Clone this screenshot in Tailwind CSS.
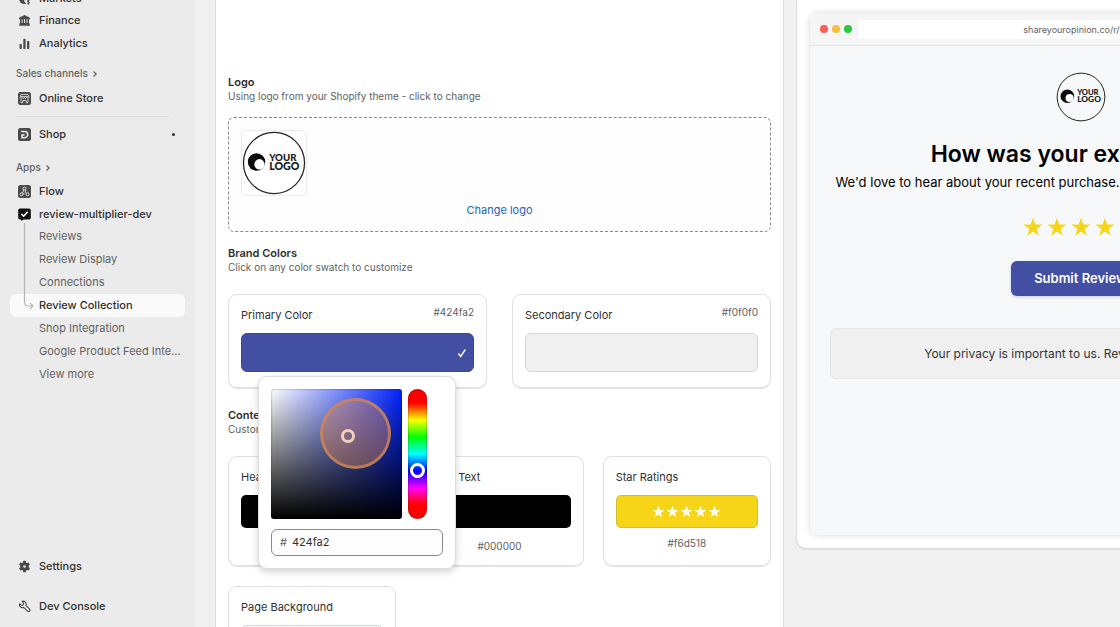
<!DOCTYPE html>
<html lang="en">
<head>
<meta charset="utf-8">
<meta name="viewport" content="width=device-width, initial-scale=1">
<title>Review Collection</title>
<script src="https://cdn.jsdelivr.net/npm/@tailwindcss/browser@4"></script>
</head>
<body class="h-screen overflow-hidden bg-[#f0f0f0] font-['Inter',sans-serif] text-[11px] text-[#303030]">
<svg class="hidden" aria-hidden="true">
  <symbol id="logo" viewBox="0 0 66 66">
    <circle cx="33" cy="33" r="31.5" fill="none" stroke="#222" stroke-width="1.3"/>
    <circle cx="15" cy="32" r="9" fill="#0b0b0b"/>
    <circle cx="18" cy="34.300" r="5.300" fill="#fff"/>
    <g font-family="Lato, sans-serif" font-weight="900" fill="#151515">
      <text x="28" y="31" font-size="10">YOUR</text>
      <text x="28" y="40" font-size="11">LOGO</text>
    </g>
  </symbol>
  <symbol id="star" viewBox="0 0 20 20">
    <path d="M10 .8l2.300 6.700 7.100.1-5.700 4.300 2.100 6.800L10 14.600l-5.800 4.100 2.100-6.800L.6 7.600l7.100-.1z" fill="currentColor"/>
  </symbol>
  <symbol id="chev" viewBox="0 0 6 8"><path d="M1.500 1.500 4.200 4l-2.700 2.500" fill="none" stroke="currentColor" stroke-width="1.200"/></symbol>
</svg>
<div class="flex h-full">
  <aside class="flex h-full w-[195px] shrink-0 flex-col justify-between overflow-hidden bg-[#ebebeb] px-[10px] pb-[9px]">
    <nav class="-mt-[13px] flex flex-col font-medium text-[#303030]" aria-label="Main">
      <a href="#" class="flex h-[22px] items-center gap-2 px-2"><svg class="size-[13px]" viewBox="0 0 13 13"><circle cx="6.500" cy="6.500" r="5.500" fill="#4a4a4a"/><path d="M7 6h6v7H9L6 9z" fill="#ebebeb"/><path d="M11.500 8.300c-2-.8-3 1.200-1 1.700s1.200 2-1 1.400M10.300 7.300v5.200" fill="none" stroke="#4a4a4a"/></svg>Markets</a>
      <a href="#" class="flex h-[23px] items-center gap-2 px-2"><svg class="size-[13px]" viewBox="0 0 13 13" fill="#4a4a4a"><path d="M6.500 1 12 3.700v1.500H1V3.700zM2 5h1.600v4.500H2zM4.500 5h1.500v4.500H4.500zM7 5h1.500v4.500H7zM9.500 5H11v4.500H9.500zM1.800 9h9.500l.8 2.800H1z"/></svg>Finance</a>
      <a href="#" class="flex h-[23px] items-center gap-2 px-2"><svg class="size-[13px]" viewBox="0 0 13 13" fill="#4a4a4a"><rect x="1.500" y="7" width="2.300" height="5" rx=".8"/><rect x="5.300" y="1.800" width="2.300" height="10.200" rx=".8"/><rect x="9" y="4" width="2.300" height="8" rx=".8"/></svg>Analytics</a>
      <a href="#" class="mt-[7px] flex h-[23px] items-center gap-1 px-[6px] text-[10px] font-medium text-[#616161]">Sales channels<svg class="h-2 w-[6px]"><use href="#chev"/></svg></a>
      <a href="#" class="mt-[2px] flex h-[23px] items-center gap-2 px-2"><svg class="size-[13px]" viewBox="0 0 13 13"><rect width="13" height="13" rx="2.500" fill="#4a4a4a"/><path d="M3 2.500h7l1 2.700c0 1.500-2 1.500-2.200.2-.3 1.300-2.200 1.300-2.400 0-.2 1.300-2 1.300-2.300 0C3.900 6.700 2 6.700 2 5.200zM3 6.800v3.900h1.800V8.500h3.400v2.200H10V6.800M2.500 4.500h8" fill="none" stroke="#e6e6e6" stroke-width=".8"/></svg>Online Store</a>
      <hr class="mt-[6px] mr-4 ml-[6px] border-[#dddddd]">
      <a href="#" class="mt-[6px] flex h-[23px] items-center gap-2 px-2"><svg class="size-[13px]" viewBox="0 0 13 13"><rect width="13" height="13" rx="2.500" fill="#4a4a4a"/><path d="M3.200 3.400h3.400a3.100 3.100 0 0 1 0 6.300H4V6.900h2.600" fill="none" stroke="#f1f1f1" stroke-width="1.500"/></svg>Shop<span class="mr-[2px] ml-auto size-[3px] rounded-full bg-[#303030]"></span></a>
      <a href="#" class="mt-[10px] flex h-[23px] items-center gap-1 px-[6px] text-[10px] font-medium text-[#616161]">Apps<svg class="h-2 w-[6px]"><use href="#chev"/></svg></a>
      <a href="#" class="mt-px flex h-[23px] items-center gap-2 px-2"><svg class="size-[13px]" viewBox="0 0 13 13"><rect width="13" height="13" rx="2.500" fill="#4a4a4a"/><g fill="none" stroke="#e6e6e6" stroke-width=".9"><circle cx="6.500" cy="3.500" r="1.500"/><circle cx="3.500" cy="9.300" r="1.500"/><circle cx="9.500" cy="9.300" r="1.500"/><path d="M5.300 4.500v2.300L4 8M7.600 4.500v3l.9.7M5 9.500l1.500-1.800"/></g></svg>Flow</a>
      <a href="#" class="flex h-[23px] items-center gap-2 px-2"><svg class="size-[13px]" viewBox="0 0 13 13"><path d="M2 .5h9A1.800 1.800 0 0 1 12.800 2.300v7.400A1.800 1.800 0 0 1 11 11.500H5.500L3.500 13l-.5-1.500H2A1.800 1.800 0 0 1 .2 9.700V2.300A1.800 1.800 0 0 1 2 .5z" fill="#111"/><path d="m3.500 6 2.200 2.200 4-4.400" fill="none" stroke="#fff" stroke-width="1.600"/></svg>review-multiplier-dev</a>
      <div class="relative -mt-px flex flex-col font-normal text-[#616161]">
        <a href="#" class="flex h-[23px] items-center pl-[29px]">Reviews</a>
        <a href="#" class="flex h-[23px] items-center pl-[29px]">Review Display</a>
        <a href="#" class="flex h-[23px] items-center pl-[29px]">Connections</a>
        <a href="#" class="flex h-[23px] items-center rounded-[6px] bg-[#fafafa] pl-[29px] font-medium text-[#303030]" aria-current="page">Review Collection</a>
        <a href="#" class="flex h-[23px] items-center pl-[29px]">Shop Integration</a>
        <a href="#" class="flex h-[23px] items-center pl-[29px]">Google Product Feed Inte...</a>
        <a href="#" class="flex h-[23px] items-center pl-[29px]">View more</a>
        <svg class="absolute -top-[2px] left-3 h-[88px] w-3" viewBox="0 0 12 88" fill="none" stroke="#b5b5b5" stroke-width="1.200"><path d="M2.500 0v79q0 4 4 4H10M8 80l3 3-3 3"/></svg>
      </div>
    </nav>
    <nav class="flex flex-col gap-[17px] font-medium text-[#303030]" aria-label="Tools">
      <a href="#" class="flex h-[23px] items-center gap-2 px-2"><svg class="size-[13px]" viewBox="0 0 13 13"><path d="M5.300.8h2.400l.4 1.600 1 .5 1.600-.5 1.200 2-1.100 1.300v1.600l1.100 1.300-1.200 2-1.600-.5-1 .5-.4 1.600H5.300l-.4-1.600-1-.5-1.600.5-1.200-2 1.100-1.300V5.700L1.100 4.400l1.200-2 1.600.5 1-.5z" fill="#4a4a4a"/><circle cx="6.500" cy="6.500" r="1.300" fill="#ebebeb"/></svg>Settings</a>
      <a href="#" class="flex h-[23px] items-center gap-2 px-2"><svg class="size-[13px]" viewBox="0 0 13 13" fill="none" stroke="#4a4a4a" stroke-width="1.100" stroke-linejoin="round"><path d="M4.100 1.300a3 3 0 0 1 3.800 4l3.700 3.800a1.300 1.300 0 0 1-2 2L5.600 7.400a3 3 0 0 1-4-3.700l1.800 1.600 1.800-.4.500-1.800z"/></svg>Dev Console</a>
    </nav>
  </aside>

  <main class="flex min-w-0 flex-1 gap-[14px] overflow-hidden pl-[21px]">
    <section class="shrink-0 grow basis-[567px] bg-white px-3 pt-[75px] shadow-[0_0_0_1px_#dedede]">
      <h2 class="text-[11px] leading-[14px] font-semibold">Logo</h2>
      <p class="text-[10px] leading-[14px] text-[#616161]">Using logo from your Shopify theme - click to change</p>
      <div class="mt-[14px] flex h-[115px] flex-col rounded-[6px] border border-dashed border-[#8a8a8a] bg-[#fdfdfd] px-3 pt-[12px]">
        <div class="size-[66px] rounded-[5px] border border-[#ebebeb] bg-white"><svg class="size-full" role="img" aria-label="Your logo"><use href="#logo"/></svg></div>
        <button class="mt-[6px] self-center text-[11px] leading-4 text-[#2065b8]">Change logo</button>
      </div>

      <h2 class="mt-[14px] text-[11px] leading-[14px] font-semibold">Brand Colors</h2>
      <p class="text-[10px] leading-[14px] text-[#616161]">Click on any color swatch to customize</p>
      <div class="mt-[20px] grid grid-cols-2 gap-[25px]">
        <div class="relative h-[94px] rounded-[9px] border border-[#e0e0e0] px-3 pt-[11px] shadow-[0_1px_0_#e3e3e3]">
          <div class="flex justify-between"><h3 class="pt-px leading-4">Primary Color</h3><span class="text-[10px] leading-3 text-[#616161]">#424fa2</span></div>
          <button aria-label="Primary color" class="mt-[10px] flex h-[39px] w-full items-center justify-end rounded-[6px] border border-[#3b4792] bg-[#424fa2] pr-[5px]"><svg class="size-3" viewBox="0 0 12 12"><path d="M2.300 6.500 4.700 9.500 9.300 2.500" fill="none" stroke="#fff" stroke-width="1.400"/></svg></button>
          <div class="absolute top-[81px] left-[29px] z-10 w-[198px] rounded-[9px] border border-[#dddddd] bg-white p-3 shadow-[0_3px_7px_rgba(0,0,0,0.18)]">
            <div class="flex gap-[6px]">
              <div class="relative h-[130px] w-[131px] rounded-[3px] bg-[linear-gradient(to_top,#000,transparent),linear-gradient(to_right,#fff,transparent)] bg-[#0022ff] shadow-[inset_0_0_2px_rgba(0,0,0,0.5)]">
                <span class="absolute top-[40px] left-[70px] size-[14px] rounded-full border-[3px] border-white"></span>
                <span class="absolute top-[9px] left-[49px] size-[71px] rounded-full border-[3px] border-[#cf8558]/80 bg-[#e28a50]/40"></span>
              </div>
              <div class="relative h-[130px] w-[19px] rounded-full bg-[linear-gradient(to_bottom,#f00_14px,#ff0_31px,#0f0_48px,#0ff_65px,#00f_82px,#f0f_99px,#f00_115px)] shadow-[inset_0_0_2px_rgba(0,0,0,0.5)]">
                <span class="absolute top-[74px] left-[2px] size-[15px] rounded-full border-[3px] border-white"></span>
              </div>
            </div>
            <label class="mt-[10px] flex h-[27px] w-[172px] items-center gap-[5px] rounded-[6px] border border-[#8a8a8a] bg-[#fdfdfd] px-2 text-[11px]"><span class="text-[#616161]">#</span><input aria-label="Hex color" value="424fa2" class="w-full min-w-0 bg-transparent outline-none"></label>
          </div>
        </div>
        <div class="h-[94px] rounded-[9px] border border-[#e0e0e0] px-3 pt-[11px] shadow-[0_1px_0_#e3e3e3]">
          <div class="flex justify-between"><h3 class="pt-px leading-4">Secondary Color</h3><span class="text-[10px] leading-3 text-[#616161]">#f0f0f0</span></div>
          <button aria-label="Secondary color" class="mt-[10px] h-[39px] w-full rounded-[6px] border border-[#d6d6d6] bg-[#f0f0f0]"></button>
        </div>
      </div>

      <h2 class="mt-[20px] text-[11px] leading-[14px] font-semibold">Content Colors</h2>
      <p class="text-[10px] leading-[14px] text-[#616161]">Customize text colors</p>
      <div class="mt-[20px] grid grid-cols-3 gap-x-[19px] gap-y-[20px]">
        <div class="h-[110px] rounded-[9px] border border-[#e0e0e0] px-3 pt-3 shadow-[0_1px_0_#e3e3e3]">
          <h3 class="leading-4">Header Text</h3>
          <button aria-label="Header text color" class="mt-[10px] block h-[33px] w-full rounded-[5px] bg-black"></button>
          <p class="mt-[11px] text-center text-[10px] leading-[14px] text-[#616161]">#000000</p>
        </div>
        <div class="h-[110px] rounded-[9px] border border-[#e0e0e0] px-3 pt-3 shadow-[0_1px_0_#e3e3e3]">
          <h3 class="leading-4">Body Text</h3>
          <button aria-label="Body text color" class="mt-[10px] block h-[33px] w-full rounded-[5px] bg-black"></button>
          <p class="mt-[11px] text-center text-[10px] leading-[14px] text-[#616161]">#000000</p>
        </div>
        <div class="h-[110px] rounded-[9px] border border-[#e0e0e0] px-3 pt-3 shadow-[0_1px_0_#e3e3e3]">
          <h3 class="leading-4">Star Ratings</h3>
          <button aria-label="Star color" class="mt-[10px] flex h-[33px] w-full items-center justify-center gap-px rounded-[5px] border border-[#d6bd2c] bg-[#f6d518] text-[#fffce8]"><svg class="size-[13px]"><use href="#star"/></svg><svg class="size-[13px]"><use href="#star"/></svg><svg class="size-[13px]"><use href="#star"/></svg><svg class="size-[13px]"><use href="#star"/></svg><svg class="size-[13px]"><use href="#star"/></svg></button>
          <p class="mt-[8px] text-center text-[10px] leading-[14px] text-[#616161]">#f6d518</p>
        </div>
        <div class="h-[110px] rounded-[9px] border border-[#e0e0e0] px-3 pt-3">
          <h3 class="leading-4">Page Background</h3>
          <button aria-label="Page background color" class="mt-[10px] block h-[33px] w-full rounded-[5px] border border-[#d6d6d6] bg-[#f7f8fa]"></button>
        </div>
      </div>
    </section>

    <section class="min-w-0 shrink-0 grow basis-[567px] self-start rounded-b-[9px] bg-white p-[13px] shadow-[0_0_0_1px_#dedede,0_1px_2px_rgba(0,0,0,0.2)]">
      <div class="overflow-hidden rounded-[8px] bg-[#f7f8fa] shadow-[0_0_6px_rgba(0,0,0,0.16)]">
        <div class="flex h-[33px] items-center gap-[4px] border-b border-[#e4e4e4] bg-[#f5f5f5] px-[10px]">
          <span class="size-2 rounded-full bg-[#f5605a]"></span><span class="size-2 rounded-full bg-[#f9bc3c]"></span><span class="size-2 rounded-full bg-[#2cc840]"></span>
          <div class="ml-[2px] h-[19px] flex-1 rounded-[3px] bg-white text-center text-[9px] leading-[19px] text-[#616161]">shareyouropinion.co/r/your-store-id</div>
        </div>
        <div class="flex h-[489px] flex-col items-center px-[20px] pt-[26px]">
          <svg class="size-[50px]" role="img" aria-label="Your logo"><use href="#logo"/></svg>
          <h1 class="mt-[16px] text-[23px] leading-8 font-semibold text-black">How was your experience?</h1>
          <p class="mt-[2px] text-[13px] leading-5 whitespace-nowrap text-black">We'd love to hear about your recent purchase. Please share your thoughts here.</p>
          <div class="mt-[25px] flex gap-[4px] text-[#f6d518]"><svg class="size-5"><use href="#star"/></svg><svg class="size-5"><use href="#star"/></svg><svg class="size-5"><use href="#star"/></svg><svg class="size-5"><use href="#star"/></svg><svg class="size-5"><use href="#star"/></svg></div>
          <button class="mt-[24px] h-[35px] rounded-[6px] bg-[#424fa2] px-[23px] text-[13px] font-semibold text-white shadow-[0_1px_3px_rgba(66,79,162,0.3)]">Submit Review</button>
          <p class="mt-[32px] h-[51px] w-full rounded-[6px] border border-[#e5e5e5] bg-[#f0f0f0] text-center text-[12px] leading-[49px] text-[#333]">Your privacy is important to us. Reviews may be public.</p>
        </div>
      </div>
    </section>
  </main>
</div>
</body>
</html>
